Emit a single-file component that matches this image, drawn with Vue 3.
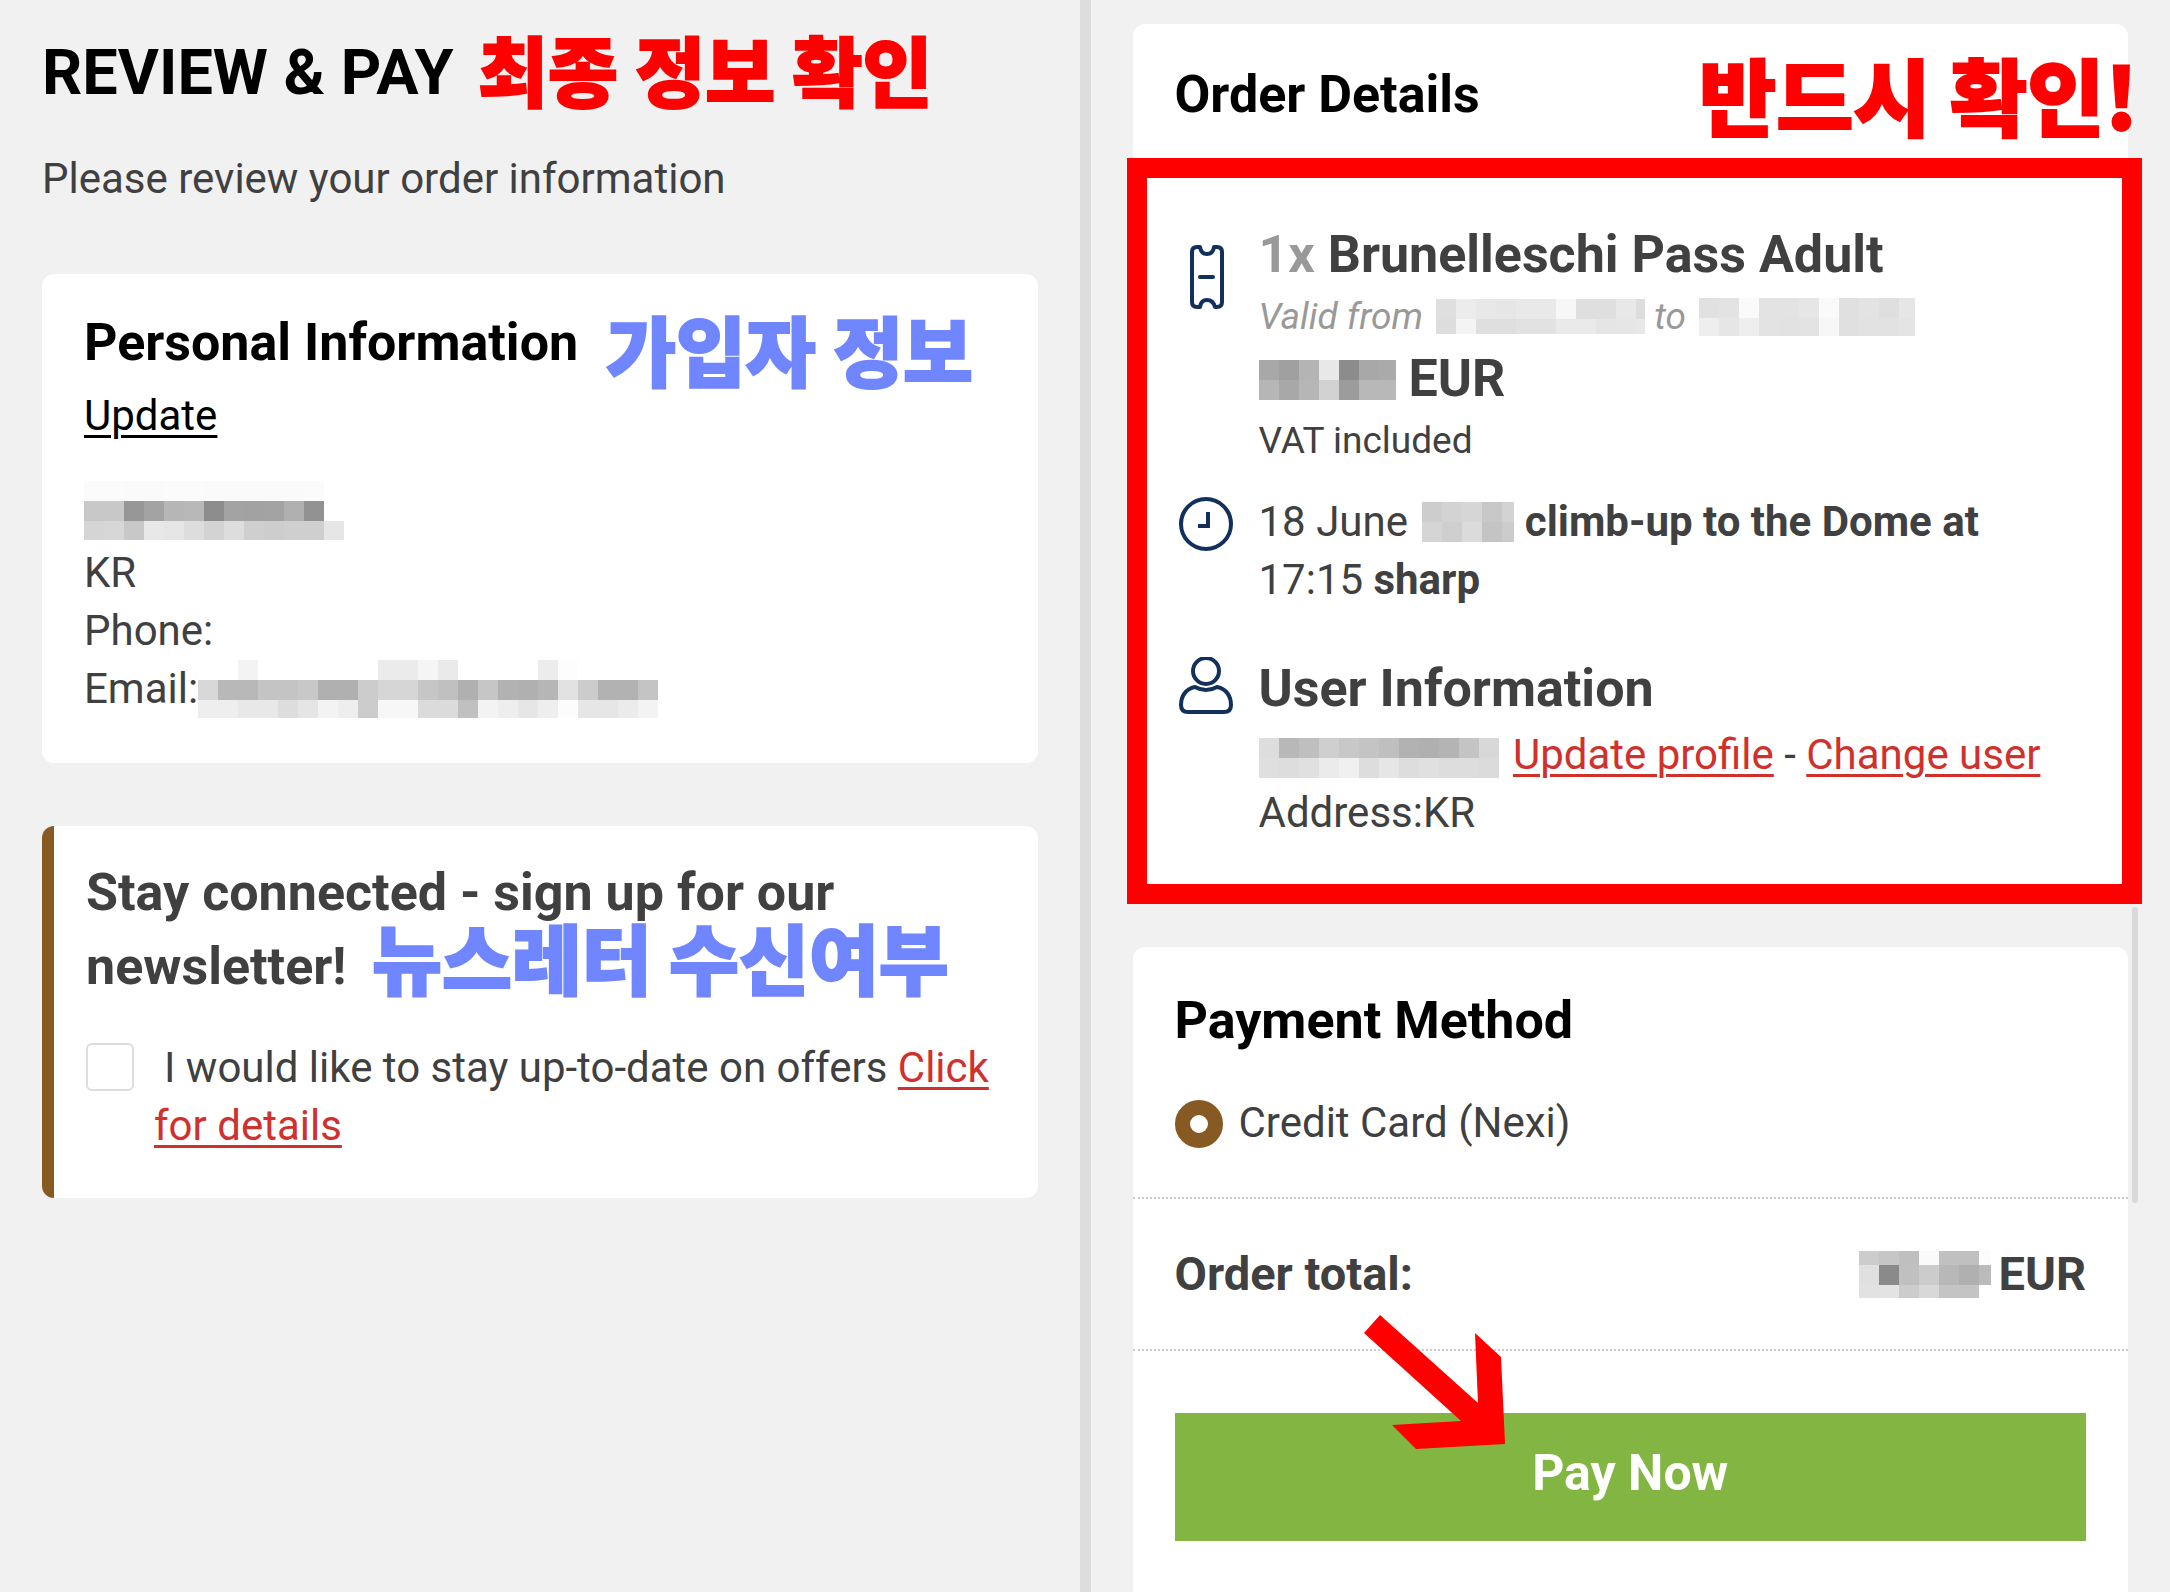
<script setup>
import { h, ref } from 'vue'

const newsletter = ref(false)
const method = ref('nexi')

const CELL = 20

// Hidden values are drawn as rows of grey cells: [row height, shades].
const masks = {
  name: {
    width: 260,
    rows: [
      [20, 'fb fb fa fa fb fb fa fa fa fa fa fb ff'],
      [20, 'c8 c8 97 a3 b6 b8 8d a3 a2 a3 b0 92 ff'],
      [19, 'd5 d7 c8 e8 e6 dd d3 dd cf cd cf cf e6'],
    ],
  },
  email: {
    width: 460,
    rows: [
      [20, 'ff ff f3 ff ff ff ff ff ff eb eb f5 ea ff ff ff ff ec fd ff ff ff ff'],
      [20, 'd8 b8 b8 c4 c4 c8 b0 b0 cc d6 d6 c6 c0 b0 c6 b2 b0 b6 e2 cc b2 b2 c4'],
      [18, 'ee ee e8 e8 dd e5 f3 ee cc f7 f7 db db c0 f3 ee e6 ee fc e6 e6 eb f3'],
    ],
  },
  from: {
    width: 209,
    rows: [
      [20, 'df ec e8 e6 e9 e9 f7 df df e8 dd'],
      [15, 'dd f4 df df e2 e2 ea ea e5 e6 e8'],
    ],
  },
  to: {
    width: 216,
    rows: [
      [20, 'e1 e3 fa e3 e3 e6 fa e0 e3 df e6'],
      [18, 'ee e6 ee e3 e2 e3 f7 e0 e2 e2 e4'],
    ],
  },
  price: {
    width: 137,
    rows: [
      [20, 'a8 a0 b4 e8 8c a8 aa'],
      [20, 'b6 a8 b6 d2 9c b8 b8'],
    ],
  },
  year: {
    width: 92,
    rows: [
      [20, 'cd d3 d6 c8 d3'],
      [20, 'd5 cf db c4 cc'],
    ],
  },
  user: {
    width: 240,
    rows: [
      [20, 'dd b8 bf cf c8 c4 bf b2 b0 b4 c4 d8'],
      [20, 'df dd e0 eb f0 dd e6 dd e0 dd dd db'],
    ],
  },
  total: {
    width: 132,
    rows: [
      [14, 'cc c6 bf fa c0 c0 fc'],
      [20, 'e0 8a c0 cc b8 b0 bb'],
      [13, 'e2 e3 cc d8 c4 c4 ff'],
    ],
  },
}

const Mask = ({ of }) => {
  const { width, rows } = masks[of]
  const height = rows.reduce((sum, row) => sum + row[0], 0)
  const cells = []
  let y = 0
  for (const [size, shades] of rows) {
    shades.split(' ').forEach((s, i) =>
      cells.push(h('rect', { x: i * CELL, y, width: CELL, height: size, fill: `#${s}${s}${s}` }))
    )
    y += size
  }
  return h(
    'svg',
    { class: 'mask', width, height, viewBox: `0 0 ${width} ${height}`, 'shape-rendering': 'crispEdges', 'aria-hidden': 'true' },
    cells
  )
}
Mask.props = ['of']
</script>

<template>
  <div class="page">
    <main class="pane">
      <header class="intro">
        <h1>REVIEW &amp; PAY</h1>
        <p>Please review your order information</p>
        <span class="note red note-title">최종 정보 확인</span>
      </header>

      <section class="card personal">
        <h2>Personal Information</h2>
        <a class="update" href="#update">Update</a>
        <span class="note blue note-personal">가입자 정보</span>
        <ul class="lines">
          <li><Mask of="name" /></li>
          <li>KR</li>
          <li>Phone:</li>
          <li>Email:<Mask of="email" /></li>
        </ul>
      </section>

      <section class="card newsletter">
        <h2>Stay connected - sign up for our newsletter!</h2>
        <span class="note blue note-newsletter">뉴스레터 수신여부</span>
        <div class="consent">
          <input id="news" v-model="newsletter" type="checkbox" />
          <label for="news">I would like to stay up-to-date on offers <a href="#details">Click for details</a></label>
        </div>
      </section>
    </main>

    <div class="divider"></div>

    <aside class="pane side">
      <section class="card order">
        <h2>Order Details</h2>
        <span class="note red note-order">반드시 확인!</span>
        <div class="details">
          <div class="item">
            <svg class="icon" viewBox="0 0 64 72" fill="none" stroke="#12305c" stroke-width="4" stroke-linecap="round" stroke-linejoin="round">
              <path d="M17 11 Q17 6 22 6 H25 Q26 13 32 13 Q38 13 39 6 H42 Q47 6 47 11 V61 Q47 66 42 66 H40 Q38 59 32 59 Q26 59 25 66 H22 Q17 66 17 61 Z" />
              <path d="M25 36 H38" />
            </svg>
            <div>
              <h3><span class="count">1x</span> Brunelleschi Pass Adult</h3>
              <p class="small validity">Valid from <Mask of="from" /> to <Mask of="to" /></p>
              <p class="price"><Mask of="price" /> EUR</p>
              <p class="small">VAT included</p>
            </div>
          </div>
          <div class="item slot">
            <svg class="icon" viewBox="0 0 64 64" fill="none" stroke="#12305c" stroke-width="4">
              <circle cx="31" cy="31" r="25" />
              <path d="M33 19 V33 H23" />
            </svg>
            <p>18 June <Mask of="year" /> <b>climb-up to the Dome at</b> 17:15 <b>sharp</b></p>
          </div>
          <div class="item person">
            <svg class="icon" viewBox="0 0 64 64" fill="none" stroke="#12305c" stroke-width="4" stroke-linejoin="round">
              <circle cx="31" cy="14" r="13" />
              <path d="M20 30 Q31 36 42 30 C52 32 56 40 56 48 Q56 55 49 55 H13 Q6 55 6 48 C6 40 10 32 20 30 Z" />
            </svg>
            <div>
              <h3>User Information</h3>
              <p><Mask of="user" /> <a href="#profile">Update profile</a> - <a href="#user">Change user</a></p>
              <p>Address:KR</p>
            </div>
          </div>
          <div class="frame"></div>
        </div>
      </section>

      <section class="card payment">
        <div class="scrollbar"></div>
        <div class="method">
          <h2>Payment Method</h2>
          <div class="choice">
            <input id="nexi" v-model="method" type="radio" name="method" value="nexi" />
            <label for="nexi">Credit Card (Nexi)</label>
          </div>
        </div>
        <div class="total">
          <span>Order total:</span>
          <span class="amount"><Mask of="total" />EUR</span>
        </div>
        <div class="action">
          <button type="button">Pay Now</button>
          <svg class="arrow" viewBox="0 0 141 134" aria-hidden="true">
            <path d="M16 0 L114 88 L111 18 L137 42 L141 129 L52 134 L28 110 L97 106 L0 18 Z" fill="#f00" />
          </svg>
        </div>
      </section>
    </aside>
  </div>
</template>

<style>
body {
  margin: 0;
  background: #f1f1f1;
}
</style>

<style scoped>
.page {
  display: grid;
  grid-template-columns: 1fr 11px 1fr;
  min-height: 100vh;
  box-sizing: border-box;
  color: #404040;
  font: 400 42px/58px Roboto, "Noto Sans CJK KR", sans-serif;
}
.pane {
  display: flex;
  flex-direction: column;
  min-width: 0;
  padding: 36px 42px 0;
}
.side {
  padding-top: 24px;
}
.divider {
  background: #ddd;
}
h1, h2, h3, p, ul {
  margin: 0;
  padding: 0;
}
h1 {
  color: #000;
  font-size: 63px;
  font-weight: 700;
  line-height: 74px;
}
h2 {
  color: #000;
  font-size: 52px;
  font-weight: 700;
  line-height: 74px;
}
h3, .price {
  font-size: 52px;
  font-weight: 700;
  line-height: 64px;
}
b {
  font-weight: 700;
}
a {
  color: #d0312d;
  text-decoration: underline;
  text-decoration-thickness: 3px;
  text-underline-offset: 5px;
}
.card {
  position: relative;
  background: #fff;
  border-radius: 12px;
}
.intro {
  position: relative;
  margin-bottom: 66px;
}
.intro p {
  margin-top: 40px;
}

.note {
  position: absolute;
  font-family: "Noto Sans CJK KR", sans-serif;
  font-size: 76px;
  font-weight: 900;
  line-height: 76px;
  white-space: nowrap;
  -webkit-text-stroke: 2px currentColor;
}
.red {
  color: #f00;
}
.blue {
  color: #6f86ff;
}
.note-title {
  left: 436px;
  top: -6px;
}
.note-personal {
  left: 564px;
  top: 36px;
}
.note-newsletter {
  left: 318px;
  top: 92px;
}
.note-order {
  right: -10px;
  top: 28px;
  font-size: 84px;
  line-height: 84px;
}

.mask {
  flex: none;
  vertical-align: middle;
}
.validity .mask,
.slot .mask {
  margin-left: 4px;
}
.validity .mask,
.price .mask,
.slot .mask {
  margin-bottom: 5px;
}
.person .mask {
  margin-right: 4px;
}
.personal {
  padding: 32px 42px 45px;
}
.update {
  display: block;
  width: max-content;
  margin: 7px 0 36px;
  color: #000;
}
.lines {
  list-style: none;
}
.lines li {
  display: flex;
  height: 58px;
  align-items: center;
}
.lines li:first-child {
  padding-bottom: 5px;
}

.newsletter {
  margin-top: 63px;
  padding: 30px 36px 43px 32px;
  border-left: 12px solid #875a24;
}
.newsletter h2 {
  max-width: 820px;
  color: #404040;
}
.consent {
  display: flex;
  gap: 20px;
  margin-top: 35px;
}
.consent label {
  text-indent: 10px;
}
input {
  appearance: none;
  box-sizing: border-box;
  flex: none;
  width: 48px;
  height: 48px;
  margin: 4px 0 0;
  background: #fff;
}
.consent input {
  border: 2px solid #ddd;
  border-radius: 6px;
}
.consent input:checked {
  background: #875a24;
}

.order h2 {
  padding: 34px 42px 26px;
}
.details {
  position: relative;
  padding: 65px 42px 62px;
}
.frame {
  position: absolute;
  inset: 0 -14px 0 -6px;
  border: 20px solid #f00;
  pointer-events: none;
}
.item {
  display: flex;
  gap: 20px;
}
.icon {
  flex: none;
  width: 64px;
  align-self: flex-start;
}
.item:first-child .icon {
  margin-top: 18px;
}
.count, .validity {
  color: #999;
}
.small {
  font-size: 37px;
  line-height: 60px;
}
.validity {
  font-style: italic;
}
.slot {
  margin-top: 22px;
}
.person {
  margin-top: 48px;
}
.person h3 {
  margin-bottom: 5px;
}

.payment {
  flex: 1;
  margin-top: 43px;
  padding-bottom: 49px;
  border-radius: 12px 12px 0 0;
}
.scrollbar {
  position: absolute;
  top: -40px;
  right: -10px;
  width: 6px;
  height: 296px;
  border-radius: 3px;
  background: #d9d9dc;
}
.method {
  padding: 37px 42px 45px;
}
.choice {
  display: flex;
  gap: 16px;
  margin-top: 36px;
}
.choice input {
  margin-top: 6px;
  border-radius: 50%;
}
.choice input:checked {
  border: 15px solid #875a24;
}
.total {
  display: flex;
  justify-content: space-between;
  align-items: center;
  height: 150px;
  padding: 0 42px;
  border: dotted #ccc;
  border-width: 2px 0;
  font-size: 47px;
  font-weight: 700;
}
.amount {
  display: flex;
  align-items: center;
  gap: 7px;
}
.action {
  position: relative;
  margin: 62px 42px 0;
}
button {
  width: 100%;
  height: 128px;
  padding: 0 0 8px;
  border: 0;
  background: #82b541;
  color: #fff;
  font: 700 50px/64px Roboto, sans-serif;
}
.arrow {
  position: absolute;
  left: 189px;
  top: -98px;
  width: 141px;
}
</style>
